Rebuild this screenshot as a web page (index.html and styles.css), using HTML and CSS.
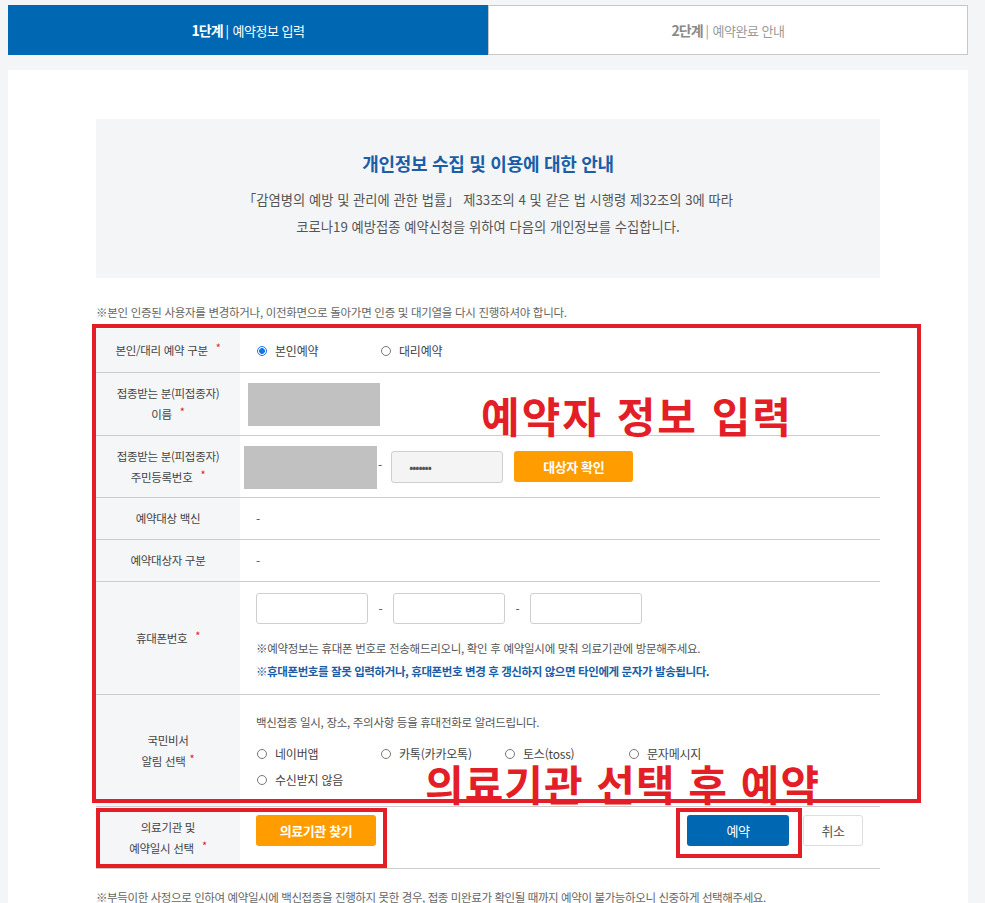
FILE: index.html
```html
<!DOCTYPE html>
<html lang="ko">
<head>
<meta charset="utf-8">
<title>예약정보 입력</title>
<link rel="stylesheet" href="styles.css">
</head>
<body>
<div class="page">
  <div class="steps">
    <div class="step active"><b>1단계</b><span class="bar">|</span>예약정보 입력</div>
    <div class="step"><b>2단계</b><span class="bar">|</span>예약완료 안내</div>
  </div>
  <div class="panel">
    <div class="info">
      <h2 class="info-title">개인정보 수집 및 이용에 대한 안내</h2>
      <p class="info-text">「감염병의 예방 및 관리에 관한 법률」 제33조의 4 및 같은 법 시행령 제32조의 3에 따라</p>
      <p class="info-text">코로나19 예방접종 예약신청을 위하여 다음의 개인정보를 수집합니다.</p>
    </div>
    <p class="note top-note">※본인 인증된 사용자를 변경하거나, 이전화면으로 돌아가면 인증 및 대기열을 다시 진행하셔야 합니다.</p>
    <div class="form-wrap">
      <div class="form">
        <div class="row r1">
          <div class="label"><span>본인/대리 예약 구분<i class="req">*</i></span></div>
          <div class="cell radios">
            <label class="radio"><span class="dot checked"></span>본인예약</label>
            <label class="radio"><span class="dot"></span>대리예약</label>
          </div>
        </div>
        <div class="row r2">
          <div class="label"><span>접종받는 분(피접종자)<br>이름<i class="req">*</i></span></div>
          <div class="cell"><div class="mask m1"></div></div>
        </div>
        <div class="row r3">
          <div class="label"><span>접종받는 분(피접종자)<br>주민등록번호<i class="req">*</i></span></div>
          <div class="cell id-cell">
            <div class="mask m2"></div>
            <span class="dash-id">-</span>
            <div class="input filled">•••••••</div>
            <button class="btn orange btn-check">대상자 확인</button>
          </div>
        </div>
        <div class="row r4">
          <div class="label"><span>예약대상 백신</span></div>
          <div class="cell">-</div>
        </div>
        <div class="row r5">
          <div class="label"><span>예약대상자 구분</span></div>
          <div class="cell">-</div>
        </div>
        <div class="row r6">
          <div class="label"><span>휴대폰번호<i class="req">*</i></span></div>
          <div class="cell phone-cell">
            <div class="phones">
              <div class="input"></div><span class="dash">-</span>
              <div class="input"></div><span class="dash">-</span>
              <div class="input"></div>
            </div>
            <p class="hint">※예약정보는 휴대폰 번호로 전송해드리오니, 확인 후 예약일시에 맞춰 의료기관에 방문해주세요.</p>
            <p class="hint blue">※휴대폰번호를 잘못 입력하거나, 휴대폰번호 변경 후 갱신하지 않으면 타인에게 문자가 발송됩니다.</p>
          </div>
        </div>
        <div class="row r7">
          <div class="label"><span>국민비서<br>알림 선택<i class="req tight">*</i></span></div>
          <div class="cell notify-cell">
            <p class="notify-text">백신접종 일시, 장소, 주의사항 등을 휴대전화로 알려드립니다.</p>
            <div class="notify-grid">
              <label class="radio"><span class="dot"></span>네이버앱</label>
              <label class="radio"><span class="dot"></span>카톡(카카오톡)</label>
              <label class="radio"><span class="dot"></span>토스(toss)</label>
              <label class="radio"><span class="dot"></span>문자메시지</label>
              <label class="radio"><span class="dot"></span>수신받지 않음</label>
            </div>
          </div>
        </div>
        <div class="row r8">
          <div class="label"><span>의료기관 및<br>예약일시 선택<i class="req">*</i></span></div>
          <div class="cell action-cell">
            <button class="btn orange btn-find">의료기관 찾기</button>
            <div class="actions">
              <button class="btn blue-btn">예약</button>
              <button class="btn cancel">취소</button>
            </div>
          </div>
        </div>
      </div>
      <div class="mark box-main"></div>
      <div class="mark box-find"></div>
      <div class="mark box-submit"></div>
      <div class="mark-text text-1">예약자 정보 입력</div>
      <div class="mark-text text-2">의료기관 선택 후 예약</div>
    </div>
    <p class="note bottom-note">※부득이한 사정으로 인하여 예약일시에 백신접종을 진행하지 못한 경우, 접종 미완료가 확인될 때까지 예약이 불가능하오니 신중하게 선택해주세요.</p>
  </div>
</div>
</body>
</html>
```

FILE: styles.css
```css
* { box-sizing: border-box; }
html, body { margin: 0; padding: 0; }
body {
  background: #f4f5f7;
  font-family: "Noto Sans CJK KR", "Noto Sans", sans-serif;
  color: #444;
  overflow: hidden;
  height: 903px;
}
.page { padding: 5px 17px 0 8px; }
.steps { display: flex; height: 50px; }
.step {
  flex: 1;
  display: flex;
  align-items: center;
  justify-content: center;
  font-size: 13px;
  letter-spacing: -0.5px;
  background: #fff;
  border: 1px solid #c8c8c8;
  color: #9a9a9a;
}
.step b { font-size: 14px; color: #8a8a8a; letter-spacing: -1px; }
.step .bar { margin: 0 4px 0 3px; color: #9a9a9a; font-weight: 400; }
.step.active { background: #0067b3; border-color: #0067b3; color: #fff; }
.step.active b, .step.active .bar { color: #fff; }

.panel {
  margin-top: 15px;
  background: #fff;
  padding: 49px 88px 0 88px;
  height: 833px;
}
.info {
  background: #f4f5f7;
  height: 159px;
  padding-top: 29px;
  text-align: center;
}
.info-title {
  margin: 0 0 8px;
  font-size: 18px;
  font-weight: 700;
  color: #1a5ea8;
  line-height: 30px;
  letter-spacing: -0.3px;
}
.info-text {
  margin: 0;
  font-size: 13.3px;
  line-height: 27px;
  color: #555;
  letter-spacing: 0;
}
.note {
  margin: 0;
  font-size: 11.5px;
  color: #666;
  letter-spacing: -0.3px;
}
.top-note { margin-top: 26px; line-height: 16px; }
.bottom-note { margin-top: 20px; line-height: 16px; letter-spacing: -0.4px; }

.form-wrap { position: relative; margin-top: 9px; }
.form { width: 784px; }
.row {
  display: flex;
  border-bottom: 1px solid #cccccc;
}
.label {
  width: 144px;
  flex: none;
  background: #f5f6f8;
  display: flex;
  align-items: center;
  justify-content: center;
  text-align: center;
  font-size: 11.5px;
  line-height: 21px;
  color: #444;
  letter-spacing: -0.3px;
}
.req { color: #e02020; font-style: normal; margin-left: 8px; font-size: 11px; position: relative; top: -3px; }
.req.tight { margin-left: 4px; }
.cell {
  flex: 1;
  display: flex;
  align-items: center;
  padding-left: 16px;
  font-size: 12px;
  color: #555;
}
.r1 { height: 44px; }
.r2 { height: 63px; }
.r3 { height: 62px; }
.r4, .r5 { height: 42px; }
.r6 { height: 113px; }
.r7 { height: 112px; }
.r8 { height: 62px; }

.radio {
  display: inline-flex;
  align-items: center;
  font-size: 12px;
  color: #444;
  letter-spacing: -0.2px;
}
.radios .radio { width: 124px; }
.dot {
  width: 10px; height: 10px;
  border: 1px solid #777;
  border-radius: 50%;
  margin-right: 8px;
  margin-left: 1px;
  flex: none;
  background: #fff;
}
.dot.checked {
  border-color: #1a73e8;
  background: radial-gradient(circle, #1a73e8 0 2.6px, #fff 3.2px);
}

.mask { background: #c1c1c1; }
.m1 { width: 132px; height: 43px; margin-left: -8px; }
.id-cell { padding-left: 4px; }
.m2 { width: 133px; height: 43px; align-self: flex-end; margin-bottom: 8px; }
.dash-id { margin: 0 9px 0 1px; position: relative; top: -2px; }
.input {
  width: 112px; height: 32px;
  border: 1px solid #cfcfcf;
  border-radius: 3px;
  background: #fff;
}
.input.filled {
  background: #f4f4f4;
  font-size: 12px;
  color: #555;
  line-height: 30px;
  padding-left: 17px;
  letter-spacing: -1px;
}
.btn {
  font-family: inherit;
  border: none;
  border-radius: 3px;
  height: 31px;
  font-size: 13px;
  cursor: pointer;
  letter-spacing: -0.4px;
}
.orange { background: #ff9c00; color: #fff; font-weight: 700; }
.btn-check { width: 119px; margin-left: 11px; }

.phone-cell { flex-direction: column; align-items: flex-start; justify-content: flex-start; padding-top: 11px; }
.phones { display: flex; align-items: center; }
.phones .input { width: 112px; height: 31px; }
.dash { width: 25px; text-align: center; font-size: 12px; }
.hint { margin: 0; font-size: 11.5px; line-height: 23px; color: #555; letter-spacing: -0.3px; }
.phones + .hint { margin-top: 13px; }
.hint.blue { color: #1a5ea8; font-weight: 700; letter-spacing: -0.4px; }

.notify-cell { flex-direction: column; align-items: flex-start; justify-content: flex-start; padding-top: 17px; }
.notify-text { margin: 0 0 12px; font-size: 11.5px; color: #555; line-height: 20px; letter-spacing: -0.3px; }
.notify-grid { display: grid; grid-template-columns: repeat(4, 124px); row-gap: 7px; }
.notify-grid .radio { line-height: 19px; }

.action-cell { align-items: flex-start; justify-content: space-between; padding-top: 8px; padding-right: 17px; }
.btn-find { width: 120px; }
.actions { display: flex; gap: 14px; }
.blue-btn { background: #0067b3; color: #fff; width: 102px; }
.cancel { background: #fff; border: 1px solid #dedede; color: #555; width: 60px; font-size: 13px; }

.mark { position: absolute; border: 4px solid #e41e26; }
.box-main { left: -4px; top: -5px; width: 829px; height: 479px; }
.box-find { left: 0; top: 479px; width: 291px; height: 60px; }
.box-submit { left: 580px; top: 479px; width: 126px; height: 50px; }
.mark-text {
  position: absolute;
  color: #e41e26;
  font-weight: 700;
  white-space: nowrap;
  line-height: 1;
}
.text-1 { left: 385px; top: 65px; font-size: 42px; letter-spacing: 2px; }
.text-2 { left: 329px; top: 433px; font-size: 42px; letter-spacing: 1px; }
```
